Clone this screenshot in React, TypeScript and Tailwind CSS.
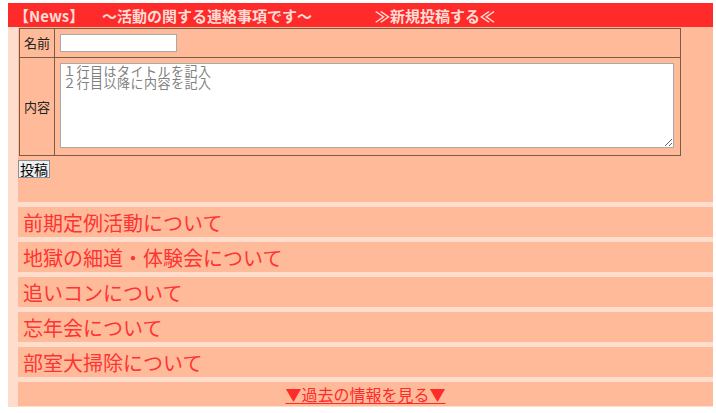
const news = [
  '前期定例活動について',
  '地獄の細道・体験会について',
  '追いコンについて',
  '忘年会について',
  '部室大掃除について',
]

const jp = { fontFamily: '"Noto Sans CJK JP", "Noto Sans", sans-serif' }

export default function App() {
  return (
    <div className="pt-[3px] pl-2 bg-white min-h-[413px]" style={jp}>
      <div className="w-[705px] bg-[#ffddcc]">
        {/* ヘッダー */}
        <div className="h-[24px] bg-[#ff2a2a] flex items-center text-[15px] font-bold text-[#ffdcd4] whitespace-nowrap leading-none">
          <span className="inline-block w-[94px] pl-[6px]">【News】</span>
          <span className="inline-block w-[273px]">〜活動の関する連絡事項です〜</span>
          <span>≫新規投稿する≪</span>
        </div>

        <div className="pl-[10px] pb-[1px] flex flex-col gap-[5px]">
          {/* 投稿フォーム */}
          <div className="bg-[#ffbb99] h-[175px] pt-[1px]">
            <div className="ml-[1px] w-[662px] border border-[#7d5a45] text-[13px] text-[#222]">
              <div className="flex h-[29px] border-b border-[#7d5a45]">
                <div className="w-[35px] border-r border-[#7d5a45] flex items-center justify-center">名前</div>
                <div className="flex-1 pl-[5px] flex items-center">
                  <input className="w-[117px] h-[18px] bg-white border border-[#a9a9a9] outline-none" />
                </div>
              </div>
              <div className="flex h-[97px]">
                <div className="w-[35px] border-r border-[#7d5a45] flex items-center justify-center">内容</div>
                <div className="flex-1 pl-[5px] pt-[5px]">
                  <textarea
                    className="block w-[614px] h-[85px] bg-white border border-[#a9a9a9] outline-none text-[13px] leading-[12px] tracking-[0.5px] text-[#808080] px-[2px] pt-[1px]"
                    defaultValue={'１行目はタイトルを記入\n２行目以降に内容を記入'}
                  />
                </div>
              </div>
            </div>
            <button className="mt-[1px] h-[18px] px-[1px] bg-[#efefef] border border-[#8f8f8f] text-[14px] leading-none text-black">
              投稿
            </button>
          </div>

          {/* お知らせ一覧 */}
          {news.map((n) => (
            <div key={n} className="bg-[#ffbb99] h-[30px] pl-[5px] text-[20px] leading-[31px] text-[#ff3333]">
              {n}
            </div>
          ))}

          <div className="bg-[#ffbb99] h-[24px] flex items-center justify-center">
            <a href="#" className="text-[16px] leading-none text-[#ff2a2a] underline underline-offset-2">
              ▼過去の情報を見る▼
            </a>
          </div>
        </div>
      </div>
    </div>
  )
}
